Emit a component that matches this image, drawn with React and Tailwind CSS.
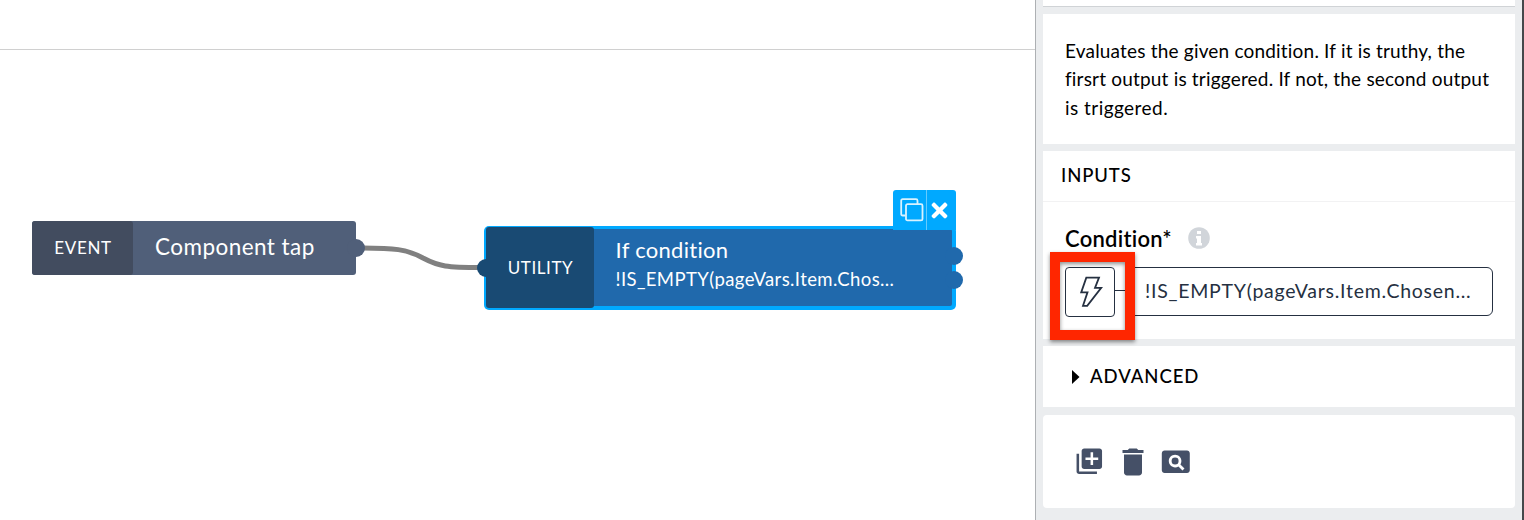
import { MdLibraryAdd, MdDelete, MdPageview } from "react-icons/md";
import { FaTimes } from "react-icons/fa";

function EventNode() {
  return (
    <div className="absolute left-8 top-[221px] flex h-[54px] w-[324px] items-center rounded-[3px] bg-[#505f79] text-white">
      <div className="flex h-full w-[101px] items-center justify-center rounded-[3px] bg-[#424c5f] pb-px pl-px text-[17px] tracking-[0.7px]">EVENT</div>
      <div className="pb-[2px] pl-[22px] text-[22.5px] tracking-[0.45px]">Component tap</div>
      <span className="absolute -right-[9px] top-[18px] size-[18px] rounded-full bg-[#505f79]" />
    </div>
  );
}

function NodeToolbar() {
  return (
    <div className="absolute left-[893px] top-[189.5px] flex h-[40px] w-[63px] rounded-t-[3px] bg-[#00a9ff] text-white">
      <div className="flex w-[34px] border-r border-[#66cbff] pl-[7px] pt-[8px]">
        <svg width="24" height="25" viewBox="0 0 24 25" fill="none" stroke="#d9f2ff" strokeWidth="1.8">
          <path d="M5.500 17.500H2.700Q1.200 17.500 1.200 16V2.700Q1.200 1.200 2.700 1.200H16Q17.500 1.200 17.500 2.700V6" />
          <rect x="6" y="6.200" width="16.500" height="16.200" rx="1.500" />
        </svg>
      </div>
      <FaTimes className="ml-[1px] mt-[9.500px] size-[23px]" />
    </div>
  );
}

function UtilityNode() {
  return (
    <div className="absolute left-[484px] top-[225.500px] h-[84px] w-[471.500px] rounded-[5px] bg-[#00a9ff] pb-[2px] pl-[2px] pr-[3.500px] pt-[1.500px] text-white">
      <div className="flex h-full items-center">
        <div className="z-10 flex h-full w-[108px] items-center justify-center rounded-[3px] bg-[#194a73] pl-px pt-px text-[17px] tracking-[0.6px]">UTILITY</div>
        <div className="-ml-1 h-[77px] flex-1 rounded-r-[2px] bg-[#2069ac] pl-[25.500px] pt-[6px]">
          <div className="text-[22px] leading-[30px] tracking-[0.3px]">If condition</div>
          <div className="text-[18.500px] leading-[29px] tracking-[0.400px]">!IS_EMPTY(pageVars.Item.Chos...</div>
        </div>
      </div>
      <span className="absolute -left-[7px] top-[33.500px] size-[18px] rounded-full bg-[#194a73]" />
      <span className="absolute -right-[7.500px] top-[21.500px] size-[18px] rounded-full bg-[#2069ac]" />
      <span className="absolute -right-[7.500px] top-[45px] size-[18px] rounded-full bg-[#2069ac]" />
    </div>
  );
}

function Canvas() {
  return (
    <main className="relative h-full w-[1035px]">
      <div className="h-[50px] border-b border-[#d0d0d0]" />
      <svg className="absolute left-[355px] top-[230px]" width="140" height="56" fill="none">
        <path d="M8 18C38 18 52 19 68 28C84 36.500 92 37.500 126 37.500" stroke="#808080" strokeWidth="5" />
      </svg>
      <EventNode />
      <UtilityNode />
      <NodeToolbar />
    </main>
  );
}

function InfoIcon() {
  return (
    <svg className="ml-[16px]" width="22" height="22" viewBox="0 0 22 22">
      <circle cx="11" cy="11" r="10.800" fill="#d1d5da" />
      <path d="M9 4H13V7H9ZM8 9H13V16H14V18.500H8V16H9V11.500H8Z" fill="#fff" />
    </svg>
  );
}

function ConditionField() {
  return (
    <div className="px-[22px] pt-[20px]">
      <div className="flex h-[32px] items-center">
        <span className="text-[22px] font-semibold tracking-[0.250px]">Condition*</span>
        <InfoIcon />
      </div>
      <div className="relative mt-[13px] flex h-[50px] text-[#253041]">
        <button className="flex size-[50px] items-center justify-center rounded-[4px] border border-[#253041]">
          <svg width="26" height="34" viewBox="0 0 26 34" fill="none" stroke="#253041" strokeWidth="1.800">
            <path d="M9.300 2.600H22L18 12.900H24.200L10.200 30.800H6L10.500 17.400H4.200Z" />
          </svg>
        </button>
        <span className="mt-[23px] h-px w-[14px] bg-[#253041]" />
        <div className="flex h-[49px] flex-1 items-center rounded-[6px] border border-[#253041] pb-[2px] pl-[15px] text-[19.500px] tracking-[0.740px]">
          !IS_EMPTY(pageVars.Item.Chosen...
        </div>
        <div className="absolute -left-[15px] -top-[15px] h-[88px] w-[85px] border-[10px] border-[#ff2600] shadow-[0_2px_4px_rgba(0,0,0,0.45),inset_0_2px_4px_rgba(0,0,0,0.45)]" />
      </div>
    </div>
  );
}

function Panel() {
  return (
    <aside className="flex h-full w-[487px] flex-col border-l border-[#adb0b3] bg-[#ebedef] pl-[7px] pr-[7px]">
      <div className="h-[7px] border-b border-[#d0d3d6] bg-white" />
      <section className="mt-[7px] h-[130px] bg-white pl-[22px] pt-[22.500px] text-[19px] leading-[28.500px] tracking-[0.190px]">
        <p>Evaluates the given condition. If it is truthy, the</p>
        <p>firsrt output is triggered. If not, the second output</p>
        <p className="tracking-[0.450px]">is triggered.</p>
      </section>
      <section className="mt-[7px] h-[188px] bg-white">
        <h2 className="flex h-[51px] items-center border-b border-[#f2f2f3] pl-[18px] text-[18.500px] font-medium tracking-[0.900px]">INPUTS</h2>
        <ConditionField />
      </section>
      <section className="mt-[7px] flex h-[61px] items-center bg-white pl-[29px]">
        <svg width="8" height="14" className="mt-[1px]"><path d="M0 0L7.500 7L0 14Z" /></svg>
        <h2 className="ml-[10px] text-[18.500px] font-medium tracking-[0.950px]">ADVANCED</h2>
      </section>
      <section className="mt-[8px] flex h-[93px] items-center rounded-[4px] bg-white pl-[31px] text-[#455067]">
        <MdLibraryAdd className="size-[30.600px]" />
        <MdDelete className="ml-[10.500px] size-[36px]" />
        <MdPageview className="ml-[7.500px] size-[33.600px]" />
      </section>
    </aside>
  );
}

export default function App() {
  return (
    <div className="flex h-[520px] w-[1524px] overflow-hidden bg-white font-['Lato',sans-serif] text-black">
      <Canvas />
      <Panel />
      <div className="w-[2px] bg-[#45484b]" />
    </div>
  );
}
